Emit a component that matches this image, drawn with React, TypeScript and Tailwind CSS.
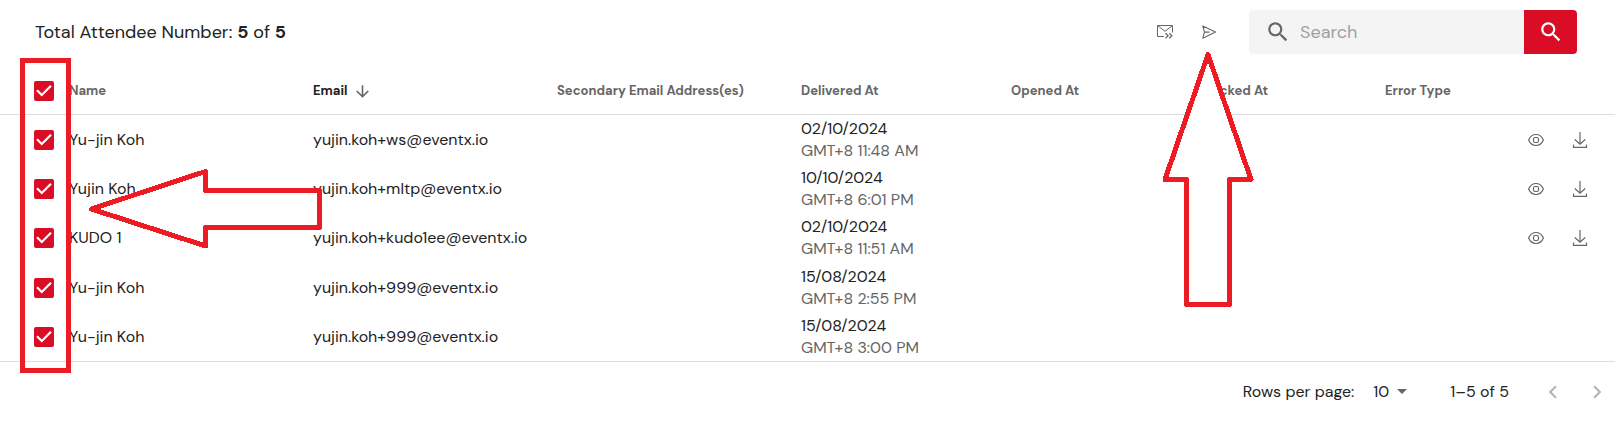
import React, { useState } from 'react';
import clsx from 'clsx';

const columns = [
  { label: 'Name', width: 'w-[244px]' },
  { label: 'Email', width: 'w-[244px]', sorted: true },
  { label: 'Secondary Email Address(es)', width: 'w-[244px]' },
  { label: 'Delivered At', width: 'w-[210px]' },
  { label: 'Opened At', width: 'w-[192px]' },
  { label: 'Clicked At', width: 'w-[182px]' },
  { label: 'Error Type', width: 'w-[124px]' },
];

const attendees = [
  { id: 1, name: 'Yu-jin Koh', email: 'yujin.koh+ws@eventx.io', date: '02/10/2024', time: 'GMT+8 11:48 AM', hasActions: true },
  { id: 2, name: 'Yujin Koh', email: 'yujin.koh+mltp@eventx.io', date: '10/10/2024', time: 'GMT+8 6:01 PM', hasActions: true },
  { id: 3, name: 'KUDO 1', email: 'yujin.koh+kudo1ee@eventx.io', date: '02/10/2024', time: 'GMT+8 11:51 AM', hasActions: true },
  { id: 4, name: 'Yu-jin Koh', email: 'yujin.koh+999@eventx.io', date: '15/08/2024', time: 'GMT+8 2:55 PM', hasActions: false },
  { id: 5, name: 'Yu-jin Koh', email: 'yujin.koh+999@eventx.io', date: '15/08/2024', time: 'GMT+8 3:00 PM', hasActions: false },
];

const SearchIcon = () => (
  <svg viewBox="0 0 24 24" className="size-[26px] shrink-0" fill="currentColor" aria-hidden="true">
    <path d="M15.5 14h-.79l-.28-.27C15.41 12.59 16 11.11 16 9.5 16 5.91 13.09 3 9.5 3S3 5.91 3 9.5 5.91 16 9.5 16c1.61 0 3.09-.59 4.23-1.57l.27.28v.79l5 4.99L20.49 19l-4.99-5zm-6 0C7.01 14 5 11.99 5 9.5S7.01 5 9.5 5 14 7.01 14 9.5 11.99 14 9.5 14z" />
  </svg>
);

const MailForwardIcon = () => (
  <svg viewBox="0 0 16 16" className="size-4" fill="none" stroke="currentColor" aria-hidden="true">
    <path d="M7 12.5H.5v-11h15v7M.8 1.8 8 7.3l7.2-5.5" />
    <path strokeWidth="1.2" d="M8.5 9.3l2.6 2.5-2.6 2.500M12.300 9.300l2.600 2.500-2.600 2.500" />
  </svg>
);

const SendIcon = () => (
  <svg viewBox="0 0 16 16" className="size-4" fill="none" stroke="currentColor" strokeWidth="1.1" strokeLinejoin="round" aria-hidden="true">
    <path d="M1.800 2l12.700 6L1.800 14.200l1.700-6.100L1.800 2zM3.500 8.100H8.500" />
  </svg>
);

const EyeIcon = () => (
  <svg viewBox="0 0 16 16" className="size-4" fill="none" stroke="currentColor" strokeWidth="1.2" aria-hidden="true">
    <path d="M.6 8C2.200 4.400 4.800 2.500 8 2.500S13.800 4.400 15.400 8C13.800 11.600 11.200 13.500 8 13.500S2.200 11.600.6 8z" />
    <rect x="5.500" y="5.500" width="5" height="5" rx="1.800" />
  </svg>
);

const DownloadIcon = () => (
  <svg viewBox="0 0 16 16" className="size-4" fill="none" stroke="currentColor" strokeWidth="1.2" aria-hidden="true">
    <path d="M8 0v12M2.800 7.500 8 12.300l5.200-4.800M1.500 12.500v2.900h13v-2.900" />
  </svg>
);

type CheckboxProps = { label: string; checked: boolean; onChange: () => void };

const Checkbox = ({ label, checked, onChange }: CheckboxProps) => (
  <label className="relative block size-5">
    <input
      type="checkbox"
      aria-label={label}
      checked={checked}
      onChange={onChange}
      className="peer block size-5 appearance-none rounded-[2px] border-2 border-[#666] checked:border-[#d90d25] checked:bg-[#d90d25]"
    />
    <svg viewBox="3 3 18 18" className="pointer-events-none absolute inset-0 hidden size-5 fill-white peer-checked:block" aria-hidden="true">
      <path d="M10 17l-5-5 1.410-1.410L10 14.170l7.590-7.590L19 8l-9 9z" />
    </svg>
  </label>
);

const Toolbar = () => (
  <div className="flex h-16 items-center pl-[35px] pr-[38px]">
    <p className="mr-auto text-[18px]">
      Total Attendee Number: <b>5</b> of <b>5</b>
    </p>
    <div className="mr-8 flex items-center gap-7 text-[#666]">
      <button type="button" aria-label="Forward by mail"><MailForwardIcon /></button>
      <button type="button" aria-label="Send"><SendIcon /></button>
    </div>
    <form className="flex h-11 w-[328px] overflow-hidden rounded" onSubmit={(e) => e.preventDefault()}>
      <label className="flex min-w-0 flex-1 items-center gap-[9px] bg-[#f4f4f4] pl-4 text-[#666]">
        <SearchIcon />
        <input
          type="text"
          placeholder="Search"
          aria-label="Search"
          className="min-w-0 flex-1 bg-transparent text-[18px] text-[#222] outline-none placeholder:text-[#a0a0a0]"
        />
      </label>
      <button type="submit" aria-label="Run search" className="flex w-[53px] items-center justify-center bg-[#d90d25] text-white">
        <SearchIcon />
      </button>
    </form>
  </div>
);

const Pagination = () => (
  <div className="flex h-[59px] items-center justify-end pr-[5px] text-[16px]">
    <label htmlFor="rows-per-page">Rows per page:</label>
    <div className="relative ml-[19px] flex items-center">
      <select id="rows-per-page" defaultValue="10" className="w-10 appearance-none bg-transparent">
        <option>10</option>
        <option>25</option>
        <option>50</option>
      </select>
      <svg viewBox="0 0 10 5" className="pointer-events-none absolute right-1.5 h-[5px] w-[10px] fill-[#666]" aria-hidden="true">
        <path d="M0 0h10L5 5z" />
      </svg>
    </div>
    <span className="ml-[37px]">1–5 of 5</span>
    <div className="ml-[31px] flex items-center gap-[18px] text-[#b5b5b5]">
      <button type="button" aria-label="Previous page" disabled>
        <svg viewBox="0 0 24 24" className="size-[26px] fill-current"><path d="M15.410 16.590 10.830 12l4.580-4.590L14 6l-6 6 6 6 1.410-1.410z" /></svg>
      </button>
      <button type="button" aria-label="Next page" disabled>
        <svg viewBox="0 0 24 24" className="size-[26px] fill-current"><path d="M8.590 16.590 13.170 12 8.590 7.410 10 6l6 6-6 6-1.410-1.410z" /></svg>
      </button>
    </div>
  </div>
);

/* Red box and arrows drawn over the table */
const Annotations = () => (
  <svg
    className="pointer-events-none absolute left-0 top-0 h-[421px] w-[1615px] max-w-none"
    stroke="#ed1c24"
    strokeWidth="5"
    strokeLinejoin="round"
    shapeRendering="crispEdges"
    fill="white"
    aria-hidden="true"
  >
    <path fill="none" strokeLinejoin="miter" d="M22.500 60.500h46v310h-46z" />
    <path d="M91.500 209l114-37.500v19h114v37h-114V246z" />
    <path d="M1208 54.500l43 125h-21.500v125h-43v-125H1165z" />
  </svg>
);

const App = () => {
  const [selected, setSelected] = useState<number[]>(attendees.map((a) => a.id));
  const allSelected = selected.length === attendees.length;

  const toggle = (id: number) => {
    setSelected((prev) => (prev.includes(id) ? prev.filter((x) => x !== id) : [...prev, id]));
  };

  return (
    <div className="relative overflow-hidden bg-white font-['DM_Sans','Inter',sans-serif] text-[#222]">
      <Toolbar />
      <table className="w-full table-fixed border-separate border-spacing-0 text-[16px]">
        <thead>
          <tr className="h-[51px] text-left text-[13px] text-[#666]">
            <th className="w-[69px] border-b border-[#ddd] pl-[34px] pt-1">
              <Checkbox
                label="Select all"
                checked={allSelected}
                onChange={() => setSelected(allSelected ? [] : attendees.map((a) => a.id))}
              />
            </th>
            {columns.map((col) => (
              <th key={col.label} className={clsx('whitespace-nowrap border-b border-[#ddd] pt-1', col.width)}>
                {col.sorted ? (
                  <button type="button" className="flex items-center gap-[6px] text-[#222]">
                    {col.label}
                    <svg viewBox="0 0 24 24" className="size-[19px] fill-[#666]" aria-hidden="true">
                      <path d="M20 12l-1.410-1.410L13 16.170V4h-2v12.170l-5.580-5.590L4 12l8 8 8-8z" />
                    </svg>
                  </button>
                ) : (
                  col.label
                )}
              </th>
            ))}
            <th aria-label="Actions" className="w-[106px] border-b border-[#ddd]" />
          </tr>
        </thead>
        <tbody>
          {attendees.map((a) => (
            <tr key={a.id} className="h-[49px] nth-3:h-[50px]">
              <td className="pl-[34px]">
                <Checkbox label={`Select ${a.name}`} checked={selected.includes(a.id)} onChange={() => toggle(a.id)} />
              </td>
              <td>{a.name}</td>
              <td>{a.email}</td>
              <td />
              <td className="whitespace-nowrap leading-[22px]">
                <div>{a.date}</div>
                <div className="text-[#666]">{a.time}</div>
              </td>
              <td />
              <td />
              <td />
              <td>
                {a.hasActions && (
                  <div className="flex justify-end gap-7 pr-[27px] text-[#666]">
                    <button type="button" aria-label="Preview"><EyeIcon /></button>
                    <button type="button" aria-label="Download"><DownloadIcon /></button>
                  </div>
                )}
              </td>
            </tr>
          ))}
        </tbody>
      </table>
      <div className="border-t border-[#ddd]">
        <Pagination />
      </div>
      <Annotations />
    </div>
  );
};

export default App;
